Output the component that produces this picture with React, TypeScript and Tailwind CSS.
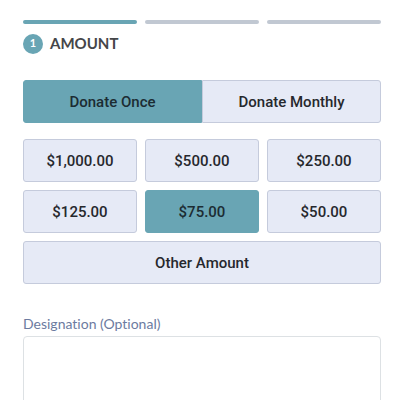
import { useState } from "react";

const amounts = ["$1,000.00", "$500.00", "$250.00", "$125.00", "$75.00", "$50.00"];
const frequencies = ["Donate Once", "Donate Monthly"];

export default function App() {
  const [frequency, setFrequency] = useState("Donate Once");
  const [amount, setAmount] = useState("$75.00");

  const tone = (active: boolean) =>
    active ? "bg-[#69a5b4] border-[#69a5b4] text-[#1c2c33]" : "bg-[#e6eaf6] border-[#c5cbdc] text-[#26282d]";

  return (
    <main className="bg-white pt-5 pr-[19px] pl-[23px] font-['Roboto',sans-serif]">
      <div className="grid grid-cols-3 gap-2" aria-hidden="true">
        <span className="h-1 rounded-full bg-[#69a5b4]" />
        <span className="h-1 rounded-full bg-[#c1c8d2]" />
        <span className="h-1 rounded-full bg-[#c1c8d2]" />
      </div>

      <header className="mt-2 flex h-[23px] items-center gap-[7px] font-['Lato',sans-serif]">
        <span className="flex size-5 items-center justify-center rounded-full bg-[#69a5b4] text-[11px] font-bold text-white">
          1
        </span>
        <h1 className="text-[15px] font-bold text-[#454649]">AMOUNT</h1>
      </header>

      <div className="mt-[25px] grid grid-cols-2" role="group" aria-label="Frequency">
        {frequencies.map((label) => (
          <button
            key={label}
            type="button"
            aria-pressed={frequency === label}
            onClick={() => setFrequency(label)}
            className={`h-[43px] border pt-0.5 text-[15px] font-medium first:rounded-l-[3px] last:rounded-r-[3px] ${tone(frequency === label)}`}
          >
            {label}
          </button>
        ))}
      </div>

      <div className="mt-4 grid grid-cols-3 gap-2" role="group" aria-label="Amount">
        {amounts.map((value) => (
          <button
            key={value}
            type="button"
            aria-pressed={amount === value}
            onClick={() => setAmount(value)}
            className={`h-[43px] rounded-[3px] border pt-0.5 text-[15px] font-medium ${tone(amount === value)}`}
          >
            {value}
          </button>
        ))}
        <button
          type="button"
          aria-pressed={amount === "other"}
          onClick={() => setAmount("other")}
          className={`col-span-3 h-[43px] rounded-[3px] border pt-0.5 text-[15px] font-medium ${tone(amount === "other")}`}
        >
          Other Amount
        </button>
      </div>

      <label
        htmlFor="designation"
        className="mt-7 block font-['Lato',sans-serif] text-sm leading-6 text-[#6c7ba0] [font-variant-ligatures:none]"
      >
        Designation (Optional)
      </label>
      <textarea
        id="designation"
        className="block h-24 w-full resize-none rounded border border-[#dde1e4] bg-white p-2 text-base text-[#26282d]"
      />
    </main>
  );
}
